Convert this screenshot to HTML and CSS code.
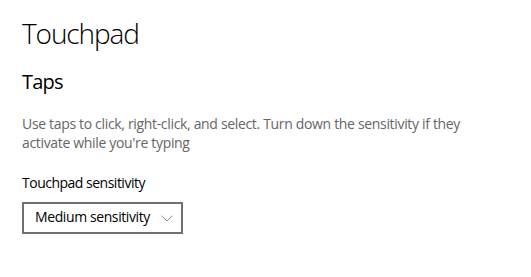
FILE: index.html
```html
<!DOCTYPE html>
<html lang="en">
<head>
<meta charset="utf-8">
<title>Touchpad</title>
<link rel="stylesheet" href="styles.css">
</head>
<body>
<main class="page">
  <h1 class="title">Touchpad</h1>
  <section class="group">
    <h2 class="group-title">Taps</h2>
    <p class="desc">Use taps to click, right-click, and select. Turn down the sensitivity if they activate while you're typing</p>
    <label class="field-label" for="sens">Touchpad sensitivity</label>
    <button class="combo" id="sens" type="button">
      <span class="combo-text">Medium sensitivity</span>
      <svg class="chevron" width="12" height="7" viewBox="0 0 12 7" aria-hidden="true"><path d="M0.5 0.7 L6 6 L11.5 0.7" fill="none" stroke="#8a8a8a" stroke-width="1"/></svg>
    </button>
  </section>
</main>
</body>
</html>
```

FILE: styles.css
```css
html, body {
  margin: 0;
  padding: 0;
  background: #ffffff;
}

body {
  font-family: "Open Sans", "Noto Sans", "Liberation Sans", sans-serif;
  color: #000000;
}

.page {
  padding: 15px 22px 0 22px;
  display: flex;
  flex-direction: column;
}

.title {
  margin: 0;
  font-size: 28px;
  font-weight: 300;
  line-height: 36px;
  letter-spacing: -1.1px;
}

.group {
  display: flex;
  flex-direction: column;
  align-items: flex-start;
  margin-top: 17px;
}

.group-title {
  margin: 0;
  font-size: 20px;
  font-weight: 400;
  line-height: 28px;
  letter-spacing: -0.8px;
}

.desc {
  margin: 18px 0 0 0;
  font-size: 14px;
  line-height: 19px;
  color: #666666;
  max-width: 450px;
  letter-spacing: -0.33px;
}

.field-label {
  margin-top: 21px;
  font-size: 14px;
  line-height: 19px;
  letter-spacing: -0.5px;
}

.combo {
  margin-top: 10px;
  display: flex;
  align-items: center;
  gap: 11px;
  height: 32px;
  box-sizing: border-box;
  border: 2px solid #707070;
  background: #ffffff;
  padding: 0 8px 2px 11px;
  font-family: inherit;
  font-size: 14px;
  line-height: 26px;
  letter-spacing: -0.4px;
  color: #000000;
  cursor: pointer;
}

.combo-text {
  display: block;
}

.chevron {
  display: block;
  margin-top: 2px;
}
```
